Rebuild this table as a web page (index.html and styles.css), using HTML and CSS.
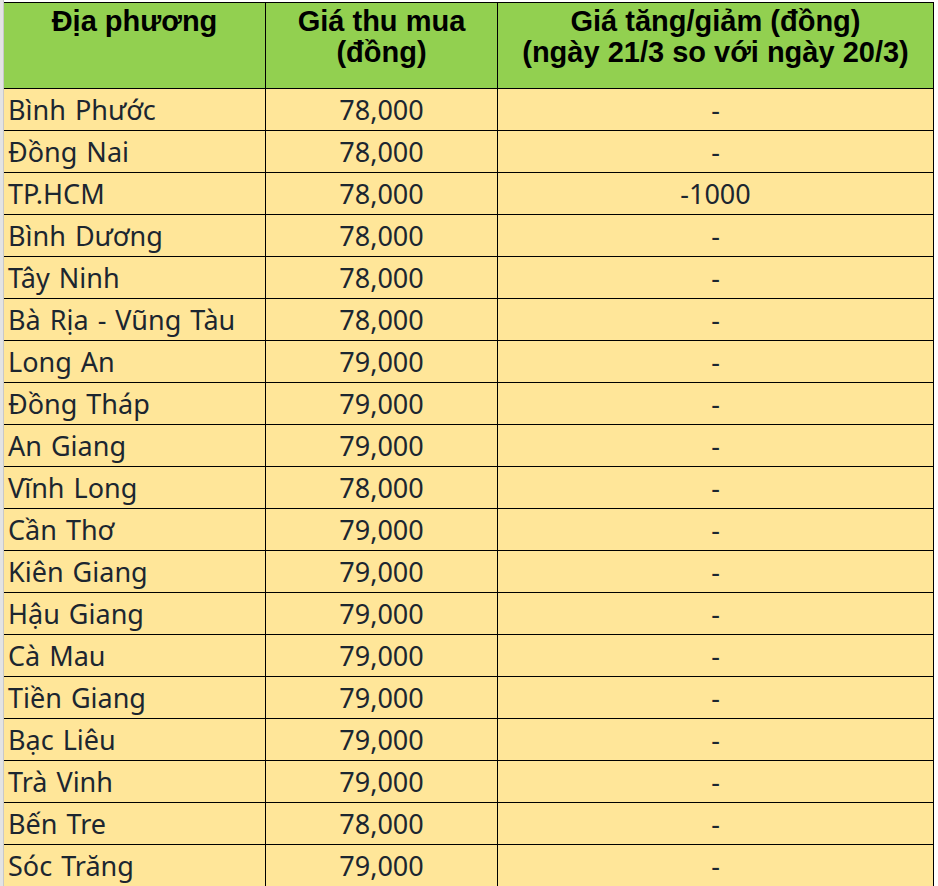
FILE: index.html
```html
<!DOCTYPE html>
<html lang="vi">
<head>
<meta charset="utf-8">
<title>Giá thu mua</title>
<link rel="stylesheet" href="styles.css">
</head>
<body>
<div class="sheet">
  <div class="grid">
    <div class="hd hd-left">Địa phương</div>
    <div class="hd">Giá thu mua<br>(đồng)</div>
    <div class="hd">Giá tăng/giảm (đồng)<br>(ngày 21/3 so với ngày 20/3)</div>

    <div class="c name">Bình Phước</div><div class="c num">78,000</div><div class="c num">-</div>
    <div class="c name">Đồng Nai</div><div class="c num">78,000</div><div class="c num">-</div>
    <div class="c name">TP.HCM</div><div class="c num">78,000</div><div class="c num">-1000</div>
    <div class="c name">Bình Dương</div><div class="c num">78,000</div><div class="c num">-</div>
    <div class="c name">Tây Ninh</div><div class="c num">78,000</div><div class="c num">-</div>
    <div class="c name">Bà Rịa - Vũng Tàu</div><div class="c num">78,000</div><div class="c num">-</div>
    <div class="c name">Long An</div><div class="c num">79,000</div><div class="c num">-</div>
    <div class="c name">Đồng Tháp</div><div class="c num">79,000</div><div class="c num">-</div>
    <div class="c name">An Giang</div><div class="c num">79,000</div><div class="c num">-</div>
    <div class="c name">Vĩnh Long</div><div class="c num">78,000</div><div class="c num">-</div>
    <div class="c name">Cần Thơ</div><div class="c num">79,000</div><div class="c num">-</div>
    <div class="c name">Kiên Giang</div><div class="c num">79,000</div><div class="c num">-</div>
    <div class="c name">Hậu Giang</div><div class="c num">79,000</div><div class="c num">-</div>
    <div class="c name">Cà Mau</div><div class="c num">79,000</div><div class="c num">-</div>
    <div class="c name">Tiền Giang</div><div class="c num">79,000</div><div class="c num">-</div>
    <div class="c name">Bạc Liêu</div><div class="c num">79,000</div><div class="c num">-</div>
    <div class="c name">Trà Vinh</div><div class="c num">79,000</div><div class="c num">-</div>
    <div class="c name">Bến Tre</div><div class="c num">78,000</div><div class="c num">-</div>
    <div class="c name">Sóc Trăng</div><div class="c num">79,000</div><div class="c num">-</div>
  </div>
</div>
</body>
</html>
```

FILE: styles.css
```css
html, body {
  margin: 0;
  padding: 0;
  background: #ffffff;
}
body {
  height: 886px;
  overflow: hidden;
}
.sheet {
  display: flex;
  padding-top: 2px;
  border-left: 3px solid #e3e3e3;
  box-shadow: inset 1px 0 0 #c8c8c8;
  padding-left: 1px;
  height: 884px;
  width: 930px;
}
.grid {
  display: grid;
  grid-template-columns: 261px 231px 435px;
  grid-template-rows: 85px repeat(19, 41px);
  gap: 1px;
  background: #000000;
  padding: 1px 1px 1px 0;
  align-self: flex-start;
}
.hd {
  background: #92d050;
  font-family: "Liberation Sans", Arial, sans-serif;
  font-weight: bold;
  font-size: 29px;
  line-height: 31px;
  color: #000;
  text-align: center;
  padding-top: 3px;
}
.c {
  background: #ffe699;
  font-family: "Noto Sans", "Open Sans", sans-serif;
  font-size: 27px;
  line-height: 30px;
  word-spacing: 2px;
  color: #1c2630;
  display: flex;
  align-items: flex-end;
  padding-bottom: 5px;
  box-sizing: border-box;
}
.name {
  padding-left: 4px;
}
.num {
  justify-content: center;
}
```
